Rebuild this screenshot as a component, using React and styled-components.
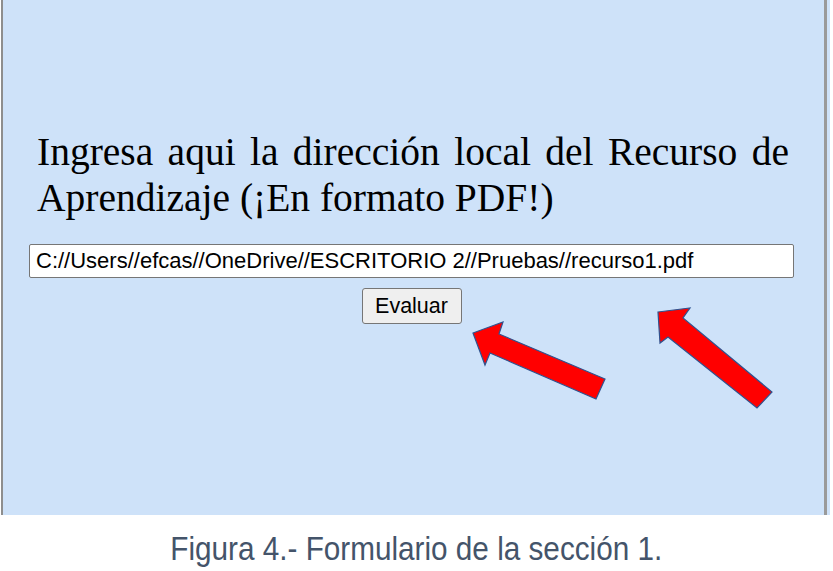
import React from "react"
import styled, { createGlobalStyle } from "styled-components"

const Global = createGlobalStyle`
  html, body {
    margin: 0;
    padding: 0;
    background: #ffffff;
  }
  body {
    width: 833px;
    height: 571px;
    overflow: hidden;
  }
`

const Figure = styled.div`
  display: flex;
  flex-direction: column;
  width: 833px;
`

const Panel = styled.div`
  position: relative;
  box-sizing: border-box;
  margin-left: 1px;
  width: 829px;
  height: 515px;
  background: #cee2f9;
  border-left: 2px solid #8e8e8e;
  display: flex;
`

const Content = styled.div`
  flex: 1;
  display: flex;
  flex-direction: column;
  align-items: center;
  padding: 129px 30px 0 26px;
`

const Heading = styled.p`
  align-self: stretch;
  margin: 0 0 23px;
  padding: 0 5px 0 8px;
  font-family: "Liberation Serif", "Times New Roman", serif;
  font-size: 39.5px;
  line-height: 46px;
  color: #000;
  text-align: justify;
  text-align-last: left;
`

const PathInput = styled.input`
  align-self: stretch;
  box-sizing: border-box;
  height: 34px;
  margin: 0 0 10px;
  padding: 0 6px;
  font-family: "Liberation Sans", Arial, sans-serif;
  font-size: 22px;
  color: #000;
  background: #fff;
  border: 1px solid #767676;
  border-radius: 2px;
  outline: none;
`

const Button = styled.button`
  box-sizing: border-box;
  width: 100px;
  height: 36px;
  font-family: "Liberation Sans", Arial, sans-serif;
  font-size: 21.5px;
  color: #000;
  background: #efefef;
  border: 1px solid #767676;
  border-radius: 3px;
  padding: 0;
`

const ScrollEdge = styled.div`
  width: 3px;
  margin-right: 3px;
  background: #9a9a9a;
`

const Arrows = styled.svg`
  position: absolute;
  left: -3px;
  top: 0;
  pointer-events: none;
`

const Caption = styled.div`
  height: 56px;
  display: flex;
  align-items: center;
  justify-content: center;
  padding-top: 6px;
`

const CaptionText = styled.span`
  display: inline-block;
  font-family: "Liberation Sans", Arial, sans-serif;
  font-size: 33px;
  color: #44546a;
  transform: scaleX(0.9);
  white-space: nowrap;
`

const Arrow = ({ points }) => (
  <polygon
    points={points}
    fill="#ff0000"
    stroke="#2f528f"
    strokeWidth="1.2"
    strokeLinejoin="miter"
  />
)

export default function App() {
  return (
    <>
      <Global />
      <Figure>
        <Panel>
          <Content>
            <Heading>
              Ingresa aqui la dirección local del Recurso de Aprendizaje (¡En
              formato PDF!)
            </Heading>
            <PathInput
              type="text"
              readOnly
              value="C://Users//efcas//OneDrive//ESCRITORIO 2//Pruebas//recurso1.pdf"
            />
            <Button type="button">Evaluar</Button>
          </Content>
          <ScrollEdge />
          <Arrows width="833" height="515" viewBox="0 0 833 515">
            <Arrow points="473,333 503,322 499,334 605,379 596,399 490,353 485,365" />
            <Arrow points="658,312 690,308 683,318 772,392 757,408 668,337 660,343" />
          </Arrows>
        </Panel>
        <Caption>
          <CaptionText>Figura 4.- Formulario de la sección 1.</CaptionText>
        </Caption>
      </Figure>
    </>
  )
}
